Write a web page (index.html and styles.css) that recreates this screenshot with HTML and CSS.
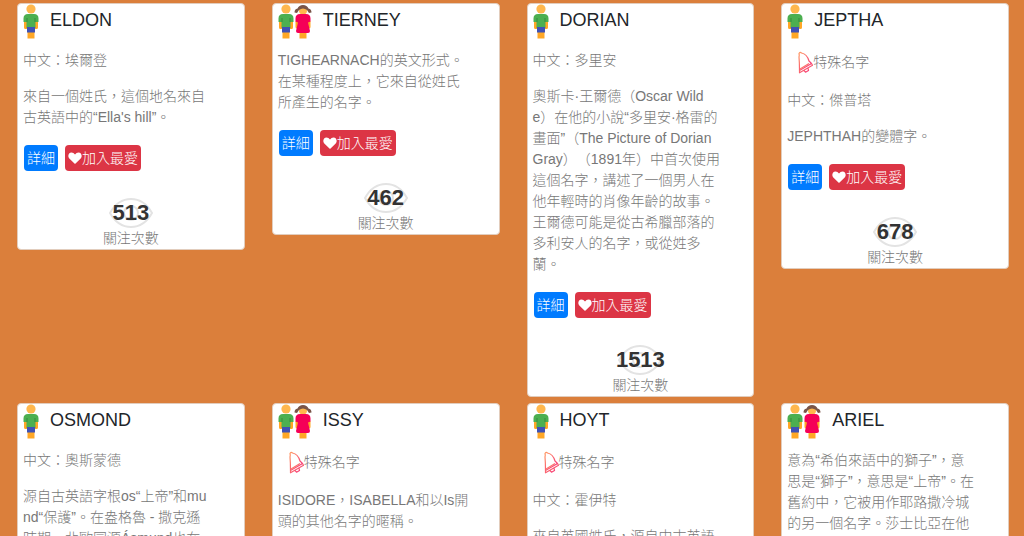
FILE: index.html
```html
<!DOCTYPE html>
<html lang="zh-Hant">
<head>
    <meta charset="UTF-8">
    <meta name="viewport" content="width=device-width, initial-scale=1.0">
    <title>英文名字</title>
    <link rel="stylesheet" href="styles.css">
</head>
<body>
    <!-- Shared icons -->
    <svg class="sprite" aria-hidden="true">
        <defs>
            <linearGradient id="bell-color" x1="0" y1="0" x2="1" y2="1">
                <stop offset="0" stop-color="#ff9a62"/>
                <stop offset="1" stop-color="#f5257e"/>
            </linearGradient>
        </defs>
        <symbol id="boy" viewBox="0 0 16 36">
            <path fill="#ffa726" d="M1 17h3v8H2.500a1.500 1.500 0 0 1-1.500-1.500zM12 17h3v6.500a1.500 1.500 0 0 1-1.500 1.500H12zM4.500 28h7v6.500h-7z"/>
            <circle cx="8" cy="5" r="4.600" fill="#ffb74d"/>
            <path fill="#4caf50" d="M.5 18v-3.500q0-4.500 4.500-4.500h6q4.500 0 4.500 4.500v3.500h-3v6H3.500v-6z"/>
            <path fill="#388e3c" d="M3.500 14h1v4h-1zM11.500 14h1v4h-1z"/>
            <path fill="#3f51b5" d="M4 23h8v5.500H4z"/>
        </symbol>
        <symbol id="girl" viewBox="0 0 18 36">
            <path fill="#ffa726" d="M1.500 17h3v7.500H3A1.500 1.500 0 0 1 1.500 23zM13.500 17h3v6a1.500 1.500 0 0 1-1.500 1.500h-1.500zM5.500 28h7v6.500h-7z"/>
            <circle cx="9" cy="6.500" r="4" fill="#ffb74d"/>
            <path fill="#795548" d="M.5 8.500Q.5 5 3.500 4.500Q5 1 9 1T14.500 4.500Q17.500 5 17.500 8.500L15 9L13 6Q9 3 5 6L3 9z"/>
            <path fill="#f50057" d="M1.500 17.500v-3q0-4.500 4.500-4.500h6q4.500 0 4.500 4.500v3l-2.500 1 2 8.500q0 2-2 2H4q-2 0-2-2l2-8.500z"/>
        </symbol>
        <symbol id="bell" viewBox="0 0 16 23">
            <g fill="none" stroke="url(#bell-color)" stroke-width="1.200" stroke-linejoin="round">
                <path d="M2 2.500Q3 .500 4.500 2Q10 3 12 10L14.500 12.500L2.500 19.500Q2.500 12 2 6Q2.500 4 2 2.500z"/>
                <path d="M14.500 12.500l1 1.800L2.500 21.800v-2.300M7 19.500l1.500 1.700 3-1.800-.500-2.400M3 18l9-5.500"/>
            </g>
        </symbol>
        <symbol id="heart" viewBox="0 0 14 14">
            <path fill="#fff" d="M7 13L1.300 7.500C-.700 5.300.500 1.500 3.500 1.500Q5.600 1.500 7 3.500Q8.400 1.500 10.500 1.500C13.500 1.500 14.700 5.300 12.700 7.500z"/>
        </symbol>
        <symbol id="eye" viewBox="0 0 44 30">
            <g fill="none" stroke="#e3e3e3" stroke-width="2">
                <path d="M1 15C6 6 13 1 22 1S38 6 43 15C38 24 31 29 22 29S6 24 1 15z"/>
                <circle cx="22" cy="15" r="7"/>
            </g>
        </symbol>
    </svg>

    <main class="names">
        <article class="card">
            <h2 class="card-title"><svg class="boy"><use href="#boy"/></svg>ELDON</h2>
            <p>中文：埃爾登</p>
            <p>來自一個姓氏，這個地名來自<br>古英語中的“Ella's hill”。</p>
            <div class="actions">
                <button class="btn btn-primary" type="button">詳細</button>
                <button class="btn btn-danger" type="button"><svg class="heart"><use href="#heart"/></svg>加入最愛</button>
            </div>
            <div class="views">
                <div class="count"><svg class="eye"><use href="#eye"/></svg><b>513</b></div>
                <div class="label">關注次數</div>
            </div>
        </article>

        <article class="card">
            <h2 class="card-title"><svg class="boy"><use href="#boy"/></svg><svg class="girl"><use href="#girl"/></svg>TIERNEY</h2>
            <p>TIGHEARNACH的英文形式。<br>在某種程度上，它來自從姓氏<br>所產生的名字。</p>
            <div class="actions">
                <button class="btn btn-primary" type="button">詳細</button>
                <button class="btn btn-danger" type="button"><svg class="heart"><use href="#heart"/></svg>加入最愛</button>
            </div>
            <div class="views">
                <div class="count"><svg class="eye"><use href="#eye"/></svg><b>462</b></div>
                <div class="label">關注次數</div>
            </div>
        </article>

        <article class="card">
            <h2 class="card-title"><svg class="boy"><use href="#boy"/></svg>DORIAN</h2>
            <p>中文：多里安</p>
            <p>奧斯卡·王爾德（Oscar Wild<br>e）在他的小說“多里安·格雷的<br>畫面”（The Picture of Dorian<br>Gray）（1891年）中首次使用<br>這個名字，講述了一個男人在<br>他年輕時的肖像年齡的故事。<br>王爾德可能是從古希臘部落的<br>多利安人的名字，或從姓多<br>蘭。</p>
            <div class="actions">
                <button class="btn btn-primary" type="button">詳細</button>
                <button class="btn btn-danger" type="button"><svg class="heart"><use href="#heart"/></svg>加入最愛</button>
            </div>
            <div class="views">
                <div class="count"><svg class="eye"><use href="#eye"/></svg><b>1513</b></div>
                <div class="label">關注次數</div>
            </div>
        </article>

        <article class="card">
            <h2 class="card-title"><svg class="boy"><use href="#boy"/></svg>JEPTHA</h2>
            <p class="special"><svg class="bell"><use href="#bell"/></svg>特殊名字</p>
            <p>中文：傑普塔</p>
            <p>JEPHTHAH的變體字。</p>
            <div class="actions">
                <button class="btn btn-primary" type="button">詳細</button>
                <button class="btn btn-danger" type="button"><svg class="heart"><use href="#heart"/></svg>加入最愛</button>
            </div>
            <div class="views">
                <div class="count"><svg class="eye"><use href="#eye"/></svg><b>678</b></div>
                <div class="label">關注次數</div>
            </div>
        </article>

        <article class="card">
            <h2 class="card-title"><svg class="boy"><use href="#boy"/></svg>OSMOND</h2>
            <p>中文：奧斯蒙德</p>
            <p>源自古英語字根os“上帝”和mu<br>nd“保護”。在盎格魯 - 撒克遜<br>時期，北歐同源Ásmund也在</p>
        </article>

        <article class="card">
            <h2 class="card-title"><svg class="boy"><use href="#boy"/></svg><svg class="girl"><use href="#girl"/></svg>ISSY</h2>
            <p class="special"><svg class="bell"><use href="#bell"/></svg>特殊名字</p>
            <p>ISIDORE，ISABELLA和以Is開<br>頭的其他名字的暱稱。</p>
        </article>

        <article class="card">
            <h2 class="card-title"><svg class="boy"><use href="#boy"/></svg>HOYT</h2>
            <p class="special"><svg class="bell"><use href="#bell"/></svg>特殊名字</p>
            <p>中文：霍伊特</p>
            <p>來自英國姓氏，源自中古英語</p>
        </article>

        <article class="card">
            <h2 class="card-title"><svg class="boy"><use href="#boy"/></svg><svg class="girl"><use href="#girl"/></svg>ARIEL</h2>
            <p>意為“希伯來語中的獅子”，意<br>思是“獅子”，意思是“上帝”。在<br>舊約中，它被用作耶路撒冷城<br>的另一個名字。莎士比亞在他</p>
        </article>
    </main>
</body>
</html>
```

FILE: styles.css
```css
* {
    box-sizing: border-box;
}
body {
    margin: 0;
    height: 100vh;
    overflow: hidden;
    background-color: #DB7F3B;
    font-family: "Liberation Sans", "Noto Sans CJK TC", sans-serif;
    font-size: 14px;
    line-height: 21px;
    color: #777;
    text-spacing-trim: space-all;
}
.sprite {
    position: absolute;
    width: 0;
    height: 0;
}
.names {
    display: grid;
    grid-template-columns: repeat(4, 1fr);
    align-items: start;
    gap: 6px 27px;
    padding: 3px 15px 0 17px;
}
.card {
    background-color: #fff;
    border: 1px solid #e2cdbd;
    border-radius: 4px;
    padding: 0 24px 0 5px;
    min-height: 200px;
}
.card-title {
    display: flex;
    height: 36px;
    margin: 0 0 10px;
    font-size: 18px;
    font-weight: 400;
    line-height: 32px;
    color: #212529;
}
.boy {
    width: 16px;
    height: 36px;
}
.girl {
    width: 18px;
    height: 36px;
}
.card-title svg:last-of-type {
    margin-right: 11px;
}
.card p {
    margin: 0 0 15px;
    font-weight: 300;
    word-break: break-all;
}
.card .special {
    display: flex;
    align-items: center;
    height: 25px;
    padding-left: 10px;
}
.bell {
    width: 16px;
    height: 23px;
}
.actions {
    display: flex;
    gap: 7px;
    padding: 2px 0 0 1px;
}
.btn {
    display: flex;
    align-items: center;
    height: 26px;
    padding: 0 3px;
    border: 0;
    border-radius: 4px;
    font: inherit;
    font-weight: 300;
    color: #fff;
    white-space: nowrap;
}
.btn-primary {
    background-color: #007bff;
}
.btn-danger {
    background-color: #dc3545;
}
.heart {
    width: 14px;
    height: 14px;
}
.views {
    margin: 27px -24px 0 -5px;
    text-align: center;
}
.count {
    position: relative;
    height: 30px;
    font-size: 22px;
    line-height: 30px;
    color: #333;
}
.count b {
    position: relative;
}
.eye {
    position: absolute;
    left: calc(50% - 22px);
    top: 0;
    width: 44px;
    height: 30px;
}
.label {
    font-weight: 300;
}
```
